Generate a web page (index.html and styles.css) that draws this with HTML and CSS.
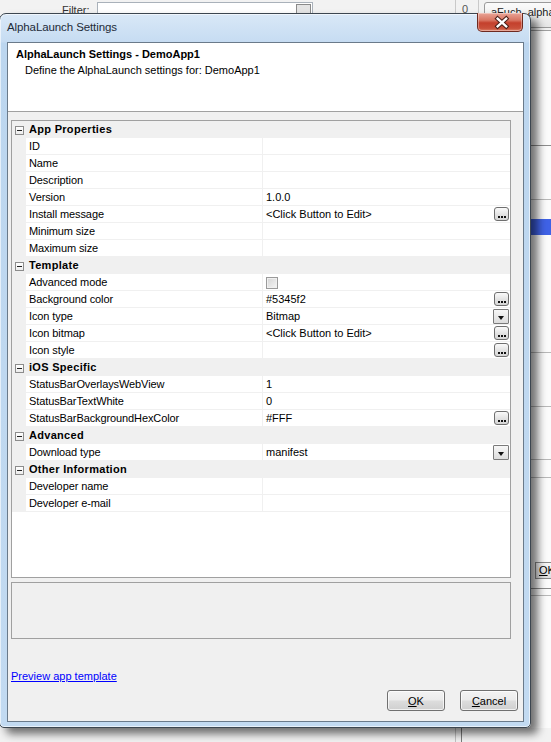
FILE: index.html
```html
<!DOCTYPE html>
<html lang="en">
<head>
  <meta charset="UTF-8" />
  <title>AlphaLaunch Settings</title>
  <link rel="stylesheet" href="styles.css">
</head>
<body>

  <!-- ==== window behind the dialog ==== -->
  <div class="bg-filter">
    <span class="bg-filter-label">Filter:</span>
    <span class="bg-filter-input"><span class="bg-filter-btn"></span></span>
  </div>
  <div class="bg-tab">0</div>
  <div class="bg-button">aFuch_alpha</div>
  <div class="bg-pane">
    <div class="bg-line l1"></div>
    <div class="bg-line l2"></div>
    <div class="bg-select"></div>
    <div class="bg-line l3"></div>
    <div class="bg-line l4"></div>
    <div class="bg-line l5"></div>
    <div class="bg-line l6"></div>
    <div class="bg-ok"><u>O</u>K</div>
    <div class="bg-line l7"></div>
    <div class="bg-line l8"></div>
  </div>
  <div class="bg-bottom-line"></div>

  <!-- ==== DIALOG ==== -->
  <div class="dialog" role="dialog" aria-label="AlphaLaunch Settings">
    <div class="titlebar">
      <span class="titlebar-text">AlphaLaunch Settings</span>
      <button class="close-btn" type="button" aria-label="Close">
        <svg width="46" height="19" viewBox="0 0 46 19" aria-hidden="true">
          <path d="M20.5 5.5 L29.5 13.5 M29.5 5.5 L20.5 13.5" stroke="#4a1f18" stroke-width="4.6" stroke-linecap="square" fill="none"/>
          <path d="M20.5 5.5 L29.5 13.5 M29.5 5.5 L20.5 13.5" stroke="#ffffff" stroke-width="2.4" stroke-linecap="square" fill="none"/>
        </svg>
      </button>
    </div>

    <div class="client">
      <div class="header">
        <div class="header-title">AlphaLaunch Settings - DemoApp1</div>
        <div class="header-sub">Define the AlphaLaunch settings for: DemoApp1</div>
      </div>

      <div class="content">
        <div class="grid">
          <div class="row cat"><span class="cell-margin"><span class="minus"></span></span><span class="cat-label">App Properties</span></div>
          <div class="row"><span class="cell-margin"></span><span class="cell-label">ID</span><span class="cell-value"></span></div>
          <div class="row"><span class="cell-margin"></span><span class="cell-label">Name</span><span class="cell-value"></span></div>
          <div class="row"><span class="cell-margin"></span><span class="cell-label">Description</span><span class="cell-value"></span></div>
          <div class="row"><span class="cell-margin"></span><span class="cell-label">Version</span><span class="cell-value">1.0.0</span></div>
          <div class="row"><span class="cell-margin"></span><span class="cell-label">Install message</span><span class="cell-value">&lt;Click Button to Edit&gt;<span class="dots-btn"></span></span></div>
          <div class="row"><span class="cell-margin"></span><span class="cell-label">Minimum size</span><span class="cell-value"></span></div>
          <div class="row"><span class="cell-margin"></span><span class="cell-label">Maximum size</span><span class="cell-value"></span></div>

          <div class="row cat"><span class="cell-margin"><span class="minus"></span></span><span class="cat-label">Template</span></div>
          <div class="row"><span class="cell-margin"></span><span class="cell-label">Advanced mode</span><span class="cell-value"><span class="checkbox"></span></span></div>
          <div class="row"><span class="cell-margin"></span><span class="cell-label">Background color</span><span class="cell-value">#5345f2<span class="dots-btn"></span></span></div>
          <div class="row"><span class="cell-margin"></span><span class="cell-label">Icon type</span><span class="cell-value">Bitmap<span class="drop-btn"></span></span></div>
          <div class="row"><span class="cell-margin"></span><span class="cell-label">Icon bitmap</span><span class="cell-value">&lt;Click Button to Edit&gt;<span class="dots-btn"></span></span></div>
          <div class="row"><span class="cell-margin"></span><span class="cell-label">Icon style</span><span class="cell-value"><span class="dots-btn"></span></span></div>

          <div class="row cat"><span class="cell-margin"><span class="minus"></span></span><span class="cat-label">iOS Specific</span></div>
          <div class="row"><span class="cell-margin"></span><span class="cell-label">StatusBarOverlaysWebView</span><span class="cell-value">1</span></div>
          <div class="row"><span class="cell-margin"></span><span class="cell-label">StatusBarTextWhite</span><span class="cell-value">0</span></div>
          <div class="row"><span class="cell-margin"></span><span class="cell-label">StatusBarBackgroundHexColor</span><span class="cell-value">#FFF<span class="dots-btn"></span></span></div>

          <div class="row cat"><span class="cell-margin"><span class="minus"></span></span><span class="cat-label">Advanced</span></div>
          <div class="row"><span class="cell-margin"></span><span class="cell-label">Download type</span><span class="cell-value">manifest<span class="drop-btn"></span></span></div>

          <div class="row cat"><span class="cell-margin"><span class="minus"></span></span><span class="cat-label">Other Information</span></div>
          <div class="row"><span class="cell-margin"></span><span class="cell-label">Developer name</span><span class="cell-value"></span></div>
          <div class="row"><span class="cell-margin"></span><span class="cell-label">Developer e-mail</span><span class="cell-value"></span></div>
        </div>

        <div class="desc"></div>

        <div class="footer">
          <a href="#" class="preview-link">Preview app template</a>
          <div class="buttons">
            <button type="button" class="win-btn"><u>O</u>K</button>
            <button type="button" class="win-btn"><u>C</u>ancel</button>
          </div>
        </div>
      </div>
    </div>
  </div>

</body>
</html>
```

FILE: styles.css
```css
/* Reset */
* {
  margin: 0;
  padding: 0;
  box-sizing: border-box;
}

html, body {
  width: 551px;
  height: 742px;
  overflow: hidden;
  position: relative;
  background: #f2f2f2;
  font-family: 'Liberation Sans', Arial, sans-serif;
  font-size: 11px;
  color: #000;
}

/* ---- window behind the dialog ---- */
.bg-filter {
  position: absolute;
  top: 2px;
  left: 62px;
  display: flex;
  align-items: flex-start;
  gap: 7px;
}

.bg-filter-label {
  font-size: 11px;
  color: #333;
  line-height: 14px;
  margin-top: 1px;
}

.bg-filter-input {
  position: relative;
  width: 216px;
  height: 18px;
  background: #fff;
  border: 1px solid #a9b1ba;
}

.bg-filter-btn {
  position: absolute;
  right: 1px;
  top: 1px;
  width: 15px;
  height: 14px;
  border: 1px solid #8a8a8a;
  background: #e4e4e4;
}

.bg-tab {
  position: absolute;
  top: 0;
  left: 455px;
  width: 24px;
  height: 30px;
  border-left: 1px solid #c9c9c9;
  border-right: 1px solid #c9c9c9;
  padding: 3px 0 0 6px;
  font-size: 11px;
  color: #555;
}

.bg-button {
  position: absolute;
  top: 2px;
  left: 484px;
  width: 90px;
  height: 26px;
  border: 1px solid #9a9a9a;
  border-radius: 3px;
  background: linear-gradient(#fbfbfb, #e6e6e6);
  padding: 3px 0 0 6px;
  font-size: 11px;
  color: #222;
}

.bg-pane {
  position: absolute;
  top: 30px;
  left: 531px;
  width: 20px;
  height: 698px;
  background: #fbfbfb;
  border-top: 1px solid #a0a0a0;
}

.bg-line {
  position: absolute;
  left: 0;
  right: 0;
  height: 1px;
  background: #b8b8b8;
}
.bg-line.l1 { top: 114px; background: #8c8c8c; }
.bg-line.l2 { top: 168px; }
.bg-line.l3 { top: 321px; }
.bg-line.l4 { top: 375px; }
.bg-line.l5 { top: 428px; }
.bg-line.l6 { top: 446px; }
.bg-line.l7 { top: 557px; background: #8c8c8c; }
.bg-line.l8 { top: 564px; }

.bg-select {
  position: absolute;
  top: 188px;
  left: 0;
  right: 0;
  height: 16px;
  background: #3f62e6;
}

.bg-ok {
  position: absolute;
  top: 531px;
  left: 4px;
  width: 40px;
  height: 17px;
  border: 1px solid #8a8a8a;
  background: linear-gradient(#f7f7f7, #dedede);
  padding: 1px 0 0 3px;
  font-size: 11px;
}

.bg-bottom-line {
  position: absolute;
  top: 728px;
  left: 455px;
  width: 7px;
  height: 14px;
  border-left: 1px solid #c0c0c0;
  border-right: 1px solid #7a7a7a;
}

/* ---- dialog frame ---- */
.dialog {
  position: absolute;
  top: 13px;
  left: -1px;
  width: 532px;
  height: 715px;
  display: flex;
  flex-direction: column;
  padding: 0 6px 5px 7px;
  border: 1px solid #3c4650;
  border-radius: 7px 7px 5px 5px;
  background: linear-gradient(to bottom, #d9e8f7 0px, #c6dcf2 28px, #bcd6ef 29px, #c2daf1 100%);
  box-shadow: 7px 6px 9px rgba(0, 0, 0, 0.55), inset 0 0 0 1px rgba(255, 255, 255, 0.6);
  z-index: 2;
}

.titlebar {
  height: 28px;
  display: flex;
  justify-content: space-between;
  align-items: flex-start;
  flex-shrink: 0;
}

.titlebar-text {
  font-size: 11.5px;
  color: #1e2b38;
  line-height: 14px;
  padding-top: 6px;
  letter-spacing: -0.1px;
}

.close-btn {
  width: 46px;
  height: 19px;
  margin-top: -1px;
  margin-right: 1px;
  display: flex;
  border: 1px solid #6e2a20;
  border-top: none;
  border-radius: 0 0 5px 5px;
  background: linear-gradient(to bottom, #e9a597 0%, #d97562 40%, #c4402c 55%, #c9503a 85%, #e0836a 100%);
  box-shadow: inset 0 0 0 1px rgba(255, 255, 255, 0.35);
  cursor: pointer;
}

/* ---- client area ---- */
.client {
  height: 680px;
  display: flex;
  flex-direction: column;
  background: #f0f0f0;
  border: 1px solid #6a7a8a;
}

.header {
  height: 69px;
  flex-shrink: 0;
  background: #fff;
  border-bottom: 1px solid #a0a0a0;
  padding: 3px 0 0 8px;
}

.header-title {
  font-weight: bold;
  font-size: 11px;
  line-height: 16px;
}

.header-sub {
  font-size: 11px;
  line-height: 16px;
  padding-left: 9px;
}

.content {
  flex: 1;
  display: flex;
  flex-direction: column;
  padding: 8px 0 0 3px;
}

/* ---- property grid ---- */
.grid {
  width: 500px;
  height: 458px;
  flex-shrink: 0;
  background: #fff;
  border: 1px solid #a0a0a0;
}

.row {
  height: 17px;
  display: flex;
  align-items: stretch;
  line-height: 16px;
}

.cell-margin {
  width: 14px;
  flex-shrink: 0;
  background: #f0f0f0;
  position: relative;
}

.cell-label {
  width: 237px;
  flex-shrink: 0;
  padding-left: 3px;
  border-right: 1px solid #f0f0f0;
  border-bottom: 1px solid #f0f0f0;
  white-space: nowrap;
  letter-spacing: -0.1px;
}

.cell-value {
  flex: 1;
  display: flex;
  align-items: flex-start;
  padding-left: 3px;
  border-bottom: 1px solid #f0f0f0;
  position: relative;
}

.row.cat {
  background: #f0f0f0;
}

.cat-label {
  padding-left: 3px;
  font-weight: bold;
  letter-spacing: 0.3px;
  line-height: 17px;
}

.minus {
  position: absolute;
  left: 3px;
  top: 5px;
  width: 9px;
  height: 9px;
  border: 1px solid #8c8c8c;
  background: linear-gradient(#fff, #ececec);
}

.minus::after {
  content: "";
  position: absolute;
  left: 1px;
  top: 3px;
  width: 5px;
  height: 1px;
  background: #222;
}

.checkbox {
  width: 12px;
  height: 12px;
  margin-top: 3px;
  border: 1px solid #9a9a9a;
  background: linear-gradient(135deg, #d4d4d4, #f6f6f6);
  box-shadow: inset 0 0 0 1px #f0f0f0;
}

.dots-btn,
.drop-btn {
  position: absolute;
  right: 1px;
  top: 1px;
  width: 15px;
  height: 14px;
  border: 1px solid #6f6f6f;
  border-radius: 3px;
  background: linear-gradient(#fafafa, #e2e2e2 55%, #d6d6d6);
}

.dots-btn::after {
  content: "";
  position: absolute;
  left: 3px;
  top: 8px;
  width: 2px;
  height: 2px;
  background: #111;
  box-shadow: 3px 0 0 #111, 6px 0 0 #111;
}

.drop-btn {
  width: 16px;
  height: 15px;
  border-radius: 1px;
  border-color: #7a7a7a;
  background: linear-gradient(#f7f7f7, #dcdcdc);
}

.drop-btn::after {
  content: "";
  position: absolute;
  left: 4px;
  top: 6px;
  border-left: 3.5px solid transparent;
  border-right: 3.5px solid transparent;
  border-top: 4px solid #111;
}

/* ---- description panel ---- */
.desc {
  width: 500px;
  height: 57px;
  margin-top: 4px;
  flex-shrink: 0;
  border: 1px solid #a0a0a0;
  background: #f0f0f0;
}

/* ---- footer ---- */
.footer {
  flex: 1;
  display: flex;
  flex-direction: column;
  padding-top: 31px;
}

.preview-link {
  align-self: flex-start;
  color: #0000ff;
  text-decoration: underline;
  font-size: 11px;
  line-height: 13px;
}

.buttons {
  display: flex;
  justify-content: flex-end;
  gap: 15px;
  margin-top: 7px;
  padding-right: 5px;
}

.win-btn {
  width: 58px;
  height: 21px;
  border: 1px solid #707070;
  border-radius: 3px;
  background: linear-gradient(#f3f3f3 0%, #ebebeb 48%, #dddddd 52%, #cfcfcf 100%);
  box-shadow: inset 0 0 0 1px rgba(255, 255, 255, 0.7);
  font-family: 'Liberation Sans', Arial, sans-serif;
  font-size: 11px;
  color: #000;
  cursor: pointer;
}
```
